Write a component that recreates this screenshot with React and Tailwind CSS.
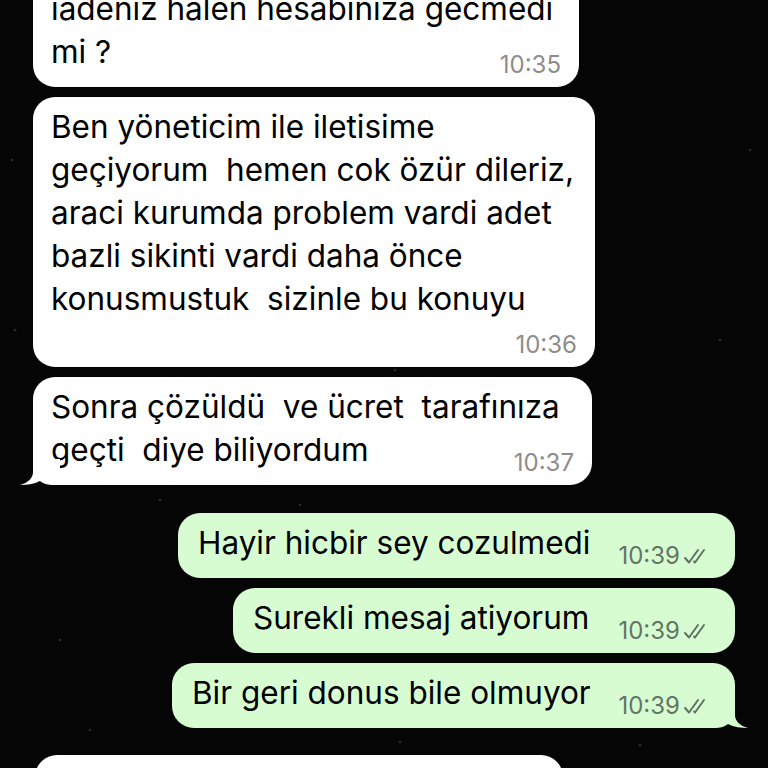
import React from 'react';

const font = { fontFamily: 'Inter, "Liberation Sans", Arial, sans-serif' };

const Ticks = () => (
    <svg width="24" height="17" viewBox="0 0 24 17" fill="none" stroke="#5f7361" strokeWidth="2" strokeLinecap="round" strokeLinejoin="round" className="mb-[3px] ml-[3px]">
        <path d="M2 10 L6 14.5 L15 2" />
        <path d="M11 13.5 L12 14.5 L21 2" />
    </svg>
);

const Tail = ({ color, right }) => (
    <svg
        width="40"
        height="26"
        viewBox="0 0 40 26"
        className={`absolute bottom-0 ${right ? 'right-[-13px] scale-x-[-1]' : 'left-[-13px]'}`}
    >
        <path d="M13 0 L13 13 C13 19 8 24 0 26 C7 26 14 25 20 22 C24 25 28 26 34 26 L40 26 L40 0 Z" fill={color} />
    </svg>
);

const InTime = ({ children }) => (
    <span className="text-[24px] leading-[24px] text-[#8d8d8d] shrink-0">{children}</span>
);

const Incoming = ({ lines, time, width, timeOwnRow, tail, className = '' }) => {
    const body = timeOwnRow ? lines : lines.slice(0, -1);
    const last = lines[lines.length - 1];
    return (
        <div className={`relative ml-[33px] rounded-[22px] bg-white pl-[18px] pr-[18px] pt-[8px] pb-[10px] ${className}`} style={{ width }}>
            {body.map((l, i) => (
                <div key={i} className="leading-[43px] whitespace-pre">{l}</div>
            ))}
            {timeOwnRow ? (
                <div className="mt-[13px] flex justify-end">
                    <InTime>{time}</InTime>
                </div>
            ) : (
                <div className="flex items-end justify-between">
                    <span className="mb-[4px] leading-[43px] whitespace-pre">{last}</span>
                    <InTime>{time}</InTime>
                </div>
            )}
            {tail && <Tail color="#ffffff" />}
        </div>
    );
};

const Outgoing = ({ text, width, tail, className = '' }) => (
    <div className={`relative mr-[33px] self-end rounded-[22px] bg-[#d8fcd2] pl-[20px] pr-[28px] pt-[8px] pb-[10px] ${className}`} style={{ width }}>
        <div className="flex items-end justify-between">
            <span className="mb-[4px] leading-[43px] whitespace-pre">{text}</span>
            <span className="flex items-end">
                <span className="text-[24px] leading-[24px] text-[#637665]">10:39</span>
                <Ticks />
            </span>
        </div>
        {tail && <Tail color="#d8fcd2" right />}
    </div>
);

export default function App() {
    return (
        <div className="relative w-[768px] h-[768px] overflow-hidden bg-[#050505] text-black text-[31.5px]" style={font}>
            <svg className="absolute inset-0" width="768" height="768">
                {[[12, 160], [395, 370], [160, 500], [400, 742], [60, 640], [520, 470], [720, 340], [300, 505], [640, 745], [90, 730], [750, 150], [15, 330]].map(([x, y], i) => (
                    <circle key={i} cx={x} cy={y} r="1.3" fill="#2a2a2a" />
                ))}
            </svg>
            <div className="relative flex flex-col gap-[10px]">
                <Incoming
                    className="mt-[-21px]"
                    width="546px"
                    lines={['iadeniz halen hesabiniza gecmedi', 'mi ?']}
                    time="10:35"
                />
                <Incoming
                    width="562px"
                    lines={[
                        'Ben yöneticim ile iletisime',
                        'geçiyorum  hemen cok özür dileriz,',
                        'araci kurumda problem vardi adet',
                        'bazli sikinti vardi daha önce',
                        'konusmustuk  sizinle bu konuyu',
                    ]}
                    time="10:36"
                    timeOwnRow
                />
                <Incoming
                    width="559px"
                    lines={['Sonra çözüldü  ve ücret  tarafınıza', 'geçti  diye biliyordum']}
                    time="10:37"
                    tail
                />
                <Outgoing className="mt-[18px]" width="557px" text="Hayir hicbir sey cozulmedi" />
                <Outgoing width="502px" text="Surekli mesaj atiyorum" />
                <Outgoing width="563px" text="Bir geri donus bile olmuyor" tail />
                <div className="ml-[35px] mt-[17px] h-[60px] w-[528px] rounded-[22px] bg-white" />
            </div>
        </div>
    );
}
